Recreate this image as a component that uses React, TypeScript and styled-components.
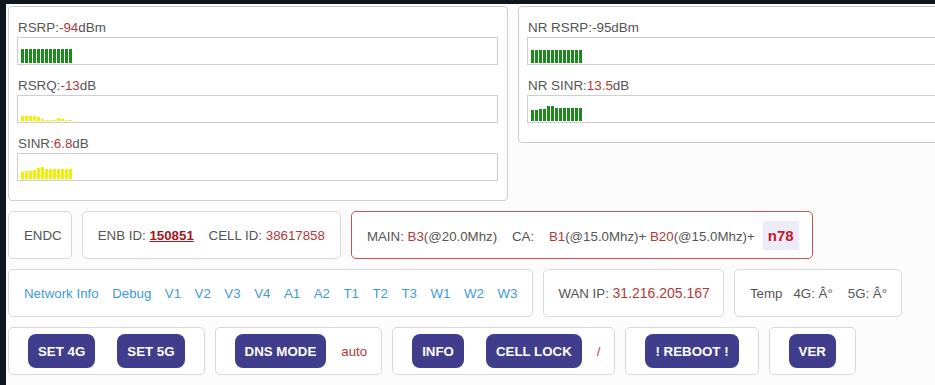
import React from "react"
import styled, { createGlobalStyle } from "styled-components"

const GlobalStyle = createGlobalStyle`
  html, body {
    margin: 0;
    padding: 0;
    background: #0f171e;
    overflow: hidden;
  }
  body {
    font-family: "Liberation Sans", Arial, sans-serif;
  }
`

const Page = styled.div`
  margin: 4px 0 0 6px;
  padding: 2px 0 0 2px;
  width: 1100px;
  height: 400px;
  box-sizing: border-box;
  background: #fcfcfc;
`

const SignalRow = styled.div`
  display: flex;
  gap: 10px;
  align-items: flex-start;
`

const SignalPanel = styled.div`
  width: 500px;
  box-sizing: border-box;
  border: 1px solid #cdcdcd;
  border-radius: 4px;
  background: #fff;
  padding: 13px 9px 6px 8px;
`

const Meter = styled.div`
  margin-bottom: 13px;
`

const MeterLabel = styled.div`
  font-size: 13.4px;
  line-height: 15px;
  color: #555;
  margin-bottom: 2px;
  margin-left: 1px;
`

const MeterBox = styled.div`
  height: 28px;
  box-sizing: border-box;
  border: 1px solid #cfcfcf;
  background: #fff;
  display: flex;
  align-items: flex-end;
  padding: 0 3px 1px;
`

const Red = styled.span<{ $bold?: boolean; $underline?: boolean; $size?: number }>`
  color: ${(p) => (p.$bold ? "#a3161b" : "#b03a3a")};
  font-weight: ${(p) => (p.$bold ? "bold" : "normal")};
  text-decoration: ${(p) => (p.$underline ? "underline" : "none")};
  font-size: ${(p) => (p.$size ? `${p.$size}px` : "inherit")};
`

const Row = styled.div`
  display: flex;
  gap: 10px;
  margin-top: 10px;
`

const Box = styled.div<{ $alert?: boolean; $gap?: number; $padL?: number; $padR?: number }>`
  height: 48px;
  box-sizing: border-box;
  border: 1px solid ${(p) => (p.$alert ? "#c9514f" : "#d9d9d9")};
  border-radius: 5px;
  background: #fff;
  padding: 0 ${(p) => p.$padR ?? 15}px 0 ${(p) => p.$padL ?? 15}px;
  display: flex;
  align-items: center;
  gap: ${(p) => p.$gap ?? 0}px;
  font-size: 13.3px;
  color: #555;
`

const Line = styled.span`
  white-space: pre;
`

const Band = styled.span`
  margin-left: 8px;
  padding: 6px 5px;
  background: #eeebf8;
  color: #c11a2a;
  font-weight: bold;
  font-size: 15px;
`

const Link = styled.a`
  color: #3f9ad6;
  text-decoration: none;
  cursor: pointer;
`

const ButtonGroup = styled.div`
  display: flex;
  gap: 22px;
`

const Button = styled.button`
  height: 34px;
  padding: 0 10px;
  border: none;
  border-radius: 8px;
  background: #413d8d;
  color: #fff;
  font-family: "Liberation Sans", Arial, sans-serif;
  font-size: 13.3px;
  font-weight: bold;
  cursor: pointer;
`

type BarsProps = { heights: number[]; color: string }

const Bars: React.FC<BarsProps> = ({ heights, color }) => (
  <svg width={heights.length * 4} height={16} style={{ display: "block" }}>
    {heights.map((h, i) => (
      <rect key={i} x={i * 4} y={16 - h} width={3} height={h} fill={color} />
    ))}
  </svg>
)

const green = "#1c8b1c"
const yellow = "#f1f000"

const links = ["Network Info", "Debug", "V1", "V2", "V3", "V4", "A1", "A2", "T1", "T2", "T3", "W1", "W2", "W3"]

export default function App() {
  return (
    <Page>
      <GlobalStyle />

      <SignalRow>
        <SignalPanel>
          <Meter>
            <MeterLabel>RSRP:<Red>-94</Red>dBm</MeterLabel>
            <MeterBox><Bars color={green} heights={[14, 14, 14, 14, 14, 14, 14, 14, 14, 14, 14, 14, 14]} /></MeterBox>
          </Meter>
          <Meter>
            <MeterLabel>RSRQ:<Red>-13</Red>dB</MeterLabel>
            <MeterBox><Bars color={yellow} heights={[5, 5, 5, 5, 4, 2, 1, 1, 1, 3, 2, 1, 1]} /></MeterBox>
          </Meter>
          <Meter>
            <MeterLabel>SINR:<Red>6.8</Red>dB</MeterLabel>
            <MeterBox><Bars color={yellow} heights={[7, 8, 8, 9, 11, 12, 10, 10, 10, 10, 10, 10, 10]} /></MeterBox>
          </Meter>
        </SignalPanel>

        <SignalPanel>
          <Meter>
            <MeterLabel>NR RSRP:-95dBm</MeterLabel>
            <MeterBox><Bars color={green} heights={[13, 13, 13, 13, 13, 13, 13, 13, 13, 13, 13, 13, 13]} /></MeterBox>
          </Meter>
          <Meter>
            <MeterLabel>NR SINR:<Red>13.5</Red>dB</MeterLabel>
            <MeterBox><Bars color={green} heights={[11, 11, 12, 12, 15, 15, 13, 13, 13, 13, 13, 13, 13]} /></MeterBox>
          </Meter>
        </SignalPanel>
      </SignalRow>

      <Row>
        <Box $padL={15} $padR={9}><Line>ENDC</Line></Box>
        <Box>
          <Line>
            ENB ID: <Red $bold $underline>150851</Red>{"    "}CELL ID: <Red>38617858</Red>
          </Line>
        </Box>
        <Box $alert $padR={13}>
          <Line>
            MAIN: <Red>B3</Red>(@20.0Mhz){"    "}CA:{"    "}<Red>B1</Red>(@15.0Mhz)+ <Red>B20</Red>(@15.0Mhz)+
            <Band>n78</Band>
          </Line>
        </Box>
      </Row>

      <Row>
        <Box $gap={13.5}>
          {links.map((l) => (
            <Link key={l}>{l}</Link>
          ))}
        </Box>
        <Box $padL={14} $padR={13}>
          <Line>WAN IP: <Red $size={14}>31.216.205.167</Red></Line>
        </Box>
        <Box $padL={15} $padR={14} $gap={11}>
          <Line>Temp</Line>
          <Line>4G: Â°</Line>
          <Line style={{ marginLeft: 4 }}>5G: Â°</Line>
        </Box>
      </Row>

      <Row>
        <Box $padL={19} $padR={19}>
          <ButtonGroup>
            <Button>SET 4G</Button>
            <Button>SET 5G</Button>
          </ButtonGroup>
        </Box>
        <Box $padL={19} $padR={14} $gap={15}>
          <Button>DNS MODE</Button>
          <Red>auto</Red>
        </Box>
        <Box $padL={19} $padR={14} $gap={15}>
          <ButtonGroup>
            <Button>INFO</Button>
            <Button>CELL LOCK</Button>
          </ButtonGroup>
          <Red>/</Red>
        </Box>
        <Box $padL={19} $padR={19}>
          <Button>! REBOOT !</Button>
        </Box>
        <Box $padL={19} $padR={19}>
          <Button>VER</Button>
        </Box>
      </Row>
    </Page>
  )
}
